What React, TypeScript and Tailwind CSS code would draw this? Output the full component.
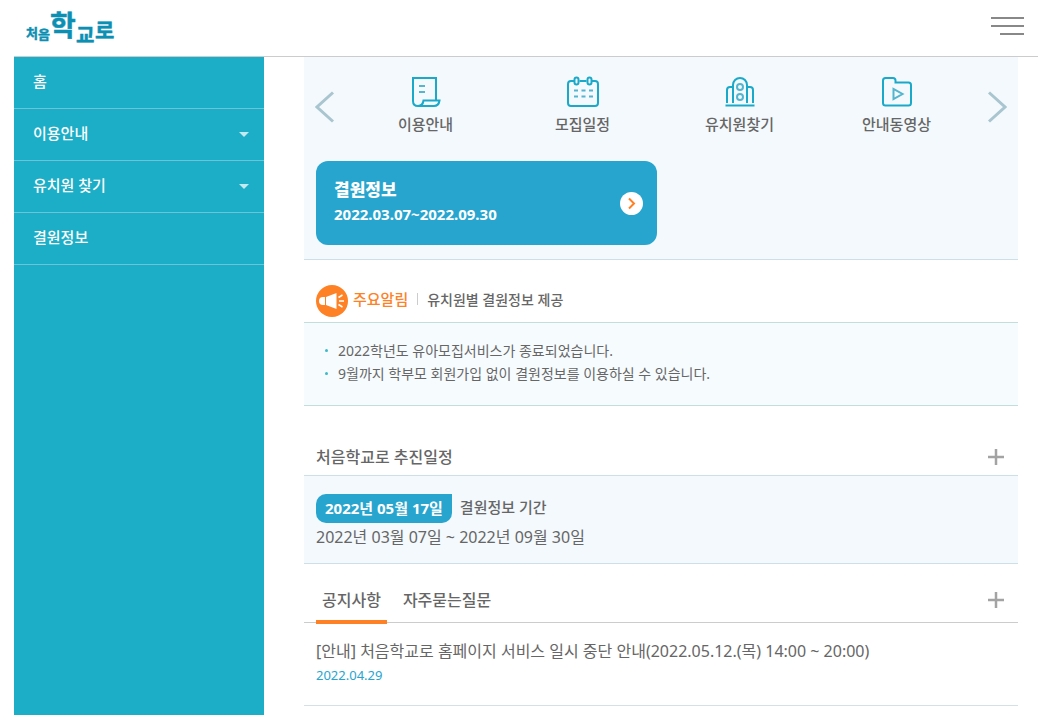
import { useState } from "react";
import type { ReactNode } from "react";

const MENU: { label: string; children?: boolean }[] = [
  { label: "홈" },
  { label: "이용안내", children: true },
  { label: "유치원 찾기", children: true },
  { label: "결원정보" },
];

const QUICK_LINKS: { label: string; icon: ReactNode }[] = [
  { label: "이용안내", icon: <GuideIcon /> },
  { label: "모집일정", icon: <CalendarIcon /> },
  { label: "유치원찾기", icon: <SchoolIcon /> },
  { label: "안내동영상", icon: <VideoIcon /> },
];

const NOTICES = [
  "2022학년도 유아모집서비스가 종료되었습니다.",
  "9월까지 학부모 회원가입 없이 결원정보를 이용하실 수 있습니다.",
];

const TABS = ["공지사항", "자주묻는질문"];

function Logo() {
  return (
    <svg
      width="90"
      height="48"
      viewBox="0 0 90 48"
      role="img"
      aria-label="처음학교로"
      className="overflow-visible fill-[#0b8fb3] stroke-[#0b8fb3] font-bold"
      strokeWidth="0.5"
    >
      <text x="0" y="34" fontSize="13">처</text>
      <text x="12" y="35" fontSize="13">음</text>
      <text x="24" y="32" fontSize="28">학</text>
      <text x="50" y="39" fontSize="20">교</text>
      <text x="69" y="34" fontSize="21">로</text>
    </svg>
  );
}

function GuideIcon() {
  return (
    <svg width="32" height="32" viewBox="0 0 32 32" fill="none" stroke="#1ba9c9" strokeWidth="2">
      <path d="M26 24V2H3v23c0 3 2 5 5 5h16c3 0 5-2 5.500-5.500H13.500c-.5 3.500-2.500 5.500-5.500 5.500" />
      <path d="M9 10h6M9 16h6" stroke="#55b5ce" />
    </svg>
  );
}

function CalendarIcon() {
  return (
    <svg width="32" height="32" viewBox="0 0 32 32" fill="none" stroke="#1ba9c9" strokeWidth="2">
      <path d="M7 5H4a3 3 0 0 0-3 3v19a3 3 0 0 0 3 3h24a3 3 0 0 0 3-3V8a3 3 0 0 0-3-3h-3M12.500 5h7" />
      <rect x="7.500" y="1.500" width="4" height="7" rx="2" />
      <rect x="20.500" y="1.500" width="4" height="7" rx="2" />
      <path d="M7 14.500h4M14.500 14.500h4M22 14.500h4M7 20.500h4M14.500 20.500h4M22 20.500h4" stroke="#55b5ce" />
    </svg>
  );
}

function SchoolIcon() {
  return (
    <svg width="32" height="32" viewBox="0 0 32 32" fill="none" stroke="#1ba9c9" strokeWidth="2">
      <path d="M9 27V9a7 7 0 0 1 14 0v18M9 11H6a3 3 0 0 0-3 3v13M23 11h3a3 3 0 0 1 3 3v13M1.500 29.500h29" />
      <circle cx="16" cy="11" r="3" stroke="#55b5ce" />
      <circle cx="16" cy="21" r="3" stroke="#55b5ce" />
    </svg>
  );
}

function VideoIcon() {
  return (
    <svg width="32" height="32" viewBox="0 0 32 32" fill="none" stroke="#1ba9c9" strokeWidth="2">
      <path d="M2 27V4.500A2.500 2.500 0 0 1 4.500 2h7.500a2.500 2.500 0 0 1 2.500 2.500V6.500h13A2.500 2.500 0 0 1 30 9v18a2.500 2.500 0 0 1-2.500 2.500h-23A2.500 2.500 0 0 1 2 27Z" />
      <path d="M12.500 13v10l9-5Z" stroke="#55b5ce" />
    </svg>
  );
}

function MegaphoneIcon() {
  return (
    <svg width="32" height="32" viewBox="0 0 32 32" className="shrink-0">
      <circle cx="16" cy="16" r="16" fill="#ff8125" />
      <path d="M9 12v8H7a4 4 0 0 1 0-8ZM10 12l10.500-4v16l-10.500-4Z" fill="#fff" />
      <path d="m22.500 12.500 4-2.500M23 16h5M22.500 19.500l4 2.500" stroke="#fff" strokeWidth="1.500" />
    </svg>
  );
}

function MoreButton({ label }: { label: string }) {
  return (
    <button type="button" aria-label={label} className="p-1">
      <svg width="16" height="16" viewBox="0 0 16 16" stroke="#a3a3a3" strokeWidth="2.500">
        <path d="M8 0v16M0 8h16" />
      </svg>
    </button>
  );
}

export default function App() {
  const [tab, setTab] = useState(TABS[0]);

  return (
    <div className="flex min-h-screen flex-col bg-white pr-[7px] pl-[14px] font-['Noto_Sans','Noto_Sans_CJK_KR',sans-serif] text-[#666]">
      <header className="flex h-[57px] items-center justify-between border-b border-[#ccc] pr-[14px] pl-3">
        <a href="#home">
          <Logo />
        </a>
        <button type="button" aria-label="전체메뉴" className="flex flex-col items-end gap-[6px] pb-1">
          <span className="h-[2px] w-[33px] bg-[#888]" />
          <span className="h-[2px] w-[33px] bg-[#888]" />
          <span className="h-[2px] w-6 bg-[#888]" />
        </button>
      </header>

      <div className="flex grow">
        <nav className="w-[250px] shrink-0 bg-[#1caec7]">
          <ul>
            {MENU.map((item) => (
              <li key={item.label} className="border-b border-[#68c6d8]">
                <a
                  href="#menu"
                  className="flex h-[51px] items-center justify-between pr-[15px] pl-[19px] text-[15px] font-medium text-white"
                >
                  <span className="pb-[3px]">{item.label}</span>
                  {item.children && (
                    <svg width="10" height="5" viewBox="0 0 10 5" fill="#c3eaf1">
                      <path d="M0 0h10L5 5Z" />
                    </svg>
                  )}
                </a>
              </li>
            ))}
          </ul>
        </nav>

        <main className="mr-5 ml-10 min-w-0 grow">
          {/* Quick links + vacancy card */}
          <section className="border-b border-[#cde0e8] bg-[#f3f9fc] px-[11px] pb-[14px]">
            <div className="flex h-[100px] items-center">
              <button type="button" aria-label="이전" className="w-8 shrink-0">
                <svg width="20" height="32" viewBox="0 0 20 32" fill="none" stroke="#a9c5cf" strokeWidth="3">
                  <path d="M18 1.500 2 16l16 14.500" />
                </svg>
              </button>
              <ul className="grid grow grid-cols-4">
                {QUICK_LINKS.map((link) => (
                  <li key={link.label}>
                    <a
                      href="#quick"
                      className="flex flex-col items-center gap-1 pb-[2px] text-[15px] leading-6 font-medium"
                    >
                      {link.icon}
                      {link.label}
                    </a>
                  </li>
                ))}
              </ul>
              <button type="button" aria-label="다음" className="flex w-8 shrink-0 justify-end">
                <svg width="20" height="32" viewBox="0 0 20 32" fill="none" stroke="#a9c5cf" strokeWidth="3">
                  <path d="m2 1.500 16 14.500-16 14.500" />
                </svg>
              </button>
            </div>
            <div className="mx-px mt-1 grid grid-cols-2 gap-2">
              <a
                href="#vacancy"
                className="flex h-[84px] items-center justify-between rounded-[12px] bg-[#27a5ce] pr-[14px] pl-[18px] text-white"
              >
                <span className="pb-[2px] font-bold">
                  <strong className="block text-[17px] leading-6">결원정보</strong>
                  <span className="block text-[15px] leading-6">2022.03.07~2022.09.30</span>
                </span>
                <svg width="23" height="23" viewBox="0 0 23 23" fill="none">
                  <circle cx="11.500" cy="11.500" r="11.500" fill="#fff" />
                  <path d="m9 6.500 5 5-5 5" stroke="#ff8125" strokeWidth="2" />
                </svg>
              </a>
            </div>
          </section>

          {/* Important notice */}
          <section className="mt-[25px]">
            <div className="flex h-[38px] items-start border-b border-[#c3dcdc] px-3">
              <MegaphoneIcon />
              <div className="flex h-7 items-center">
                <h2 className="ml-[5px] text-[15px] font-medium text-[#ff8125]">주요알림</h2>
                <span className="mx-[9px] h-3 w-px bg-[#ccc]" />
                <p className="text-[14px] font-medium">유치원별 결원정보 제공</p>
              </div>
            </div>
            <ul className="border-b border-[#c3dcdc] bg-[#f6fbfe] px-[21px] pt-4 pb-5 text-[14px] leading-[23px]">
              {NOTICES.map((notice) => (
                <li key={notice} className="flex items-center gap-[10px]">
                  <span className="size-[3px] rounded-full bg-[#3cb9cc]" />
                  {notice}
                </li>
              ))}
            </ul>
          </section>

          {/* Schedule */}
          <section className="mt-8">
            <div className="flex h-[38px] items-center justify-between border-b border-[#cde0e8] pr-[10px] pl-3">
              <h2 className="text-[16px] font-medium">처음학교로 추진일정</h2>
              <MoreButton label="추진일정 더보기" />
            </div>
            <div className="border-b border-[#cde0e8] bg-[#f3f9fc] px-3 pt-[18px] pb-3">
              <div className="flex h-[29px] items-center gap-2">
                <span className="rounded-[10px] rounded-tr-none bg-[#27a5ce] px-[9px] text-[15px] leading-[29px] font-bold text-white">
                  2022년 05월 17일
                </span>
                <strong className="pb-[2px] text-[15px] font-medium">결원정보 기간</strong>
              </div>
              <p className="text-[16px] leading-7">2022년 03월 07일 ~ 2022년 09월 30일</p>
            </div>
          </section>

          {/* Board tabs */}
          <section className="mt-[14px]">
            <div className="flex h-[45px] items-center justify-between border-b border-[#ccc] pr-[10px] pl-3">
              <div role="tablist" className="flex gap-[10px] self-start">
                {TABS.map((name) => (
                  <button
                    key={name}
                    type="button"
                    role="tab"
                    aria-selected={tab === name}
                    onClick={() => setTab(name)}
                    className={`h-[46px] border-b-4 px-[6px] pt-[2px] text-[16px] font-medium ${
                      tab === name ? "border-[#ff8125]" : "border-transparent"
                    }`}
                  >
                    {name}
                  </button>
                ))}
              </div>
              <MoreButton label="게시판 더보기" />
            </div>
            <a href="#notice" className="block border-b border-[#d5dfe6] px-3 pt-4 pb-[18px]">
              <p className="text-[16px] leading-6">
                [안내] 처음학교로 홈페이지 서비스 일시 중단 안내(2022.05.12.(목) 14:00 ~ 20:00)
              </p>
              <p className="text-[13px] leading-6 text-[#27a5ce]">2022.04.29</p>
            </a>
          </section>
        </main>
      </div>
    </div>
  );
}
